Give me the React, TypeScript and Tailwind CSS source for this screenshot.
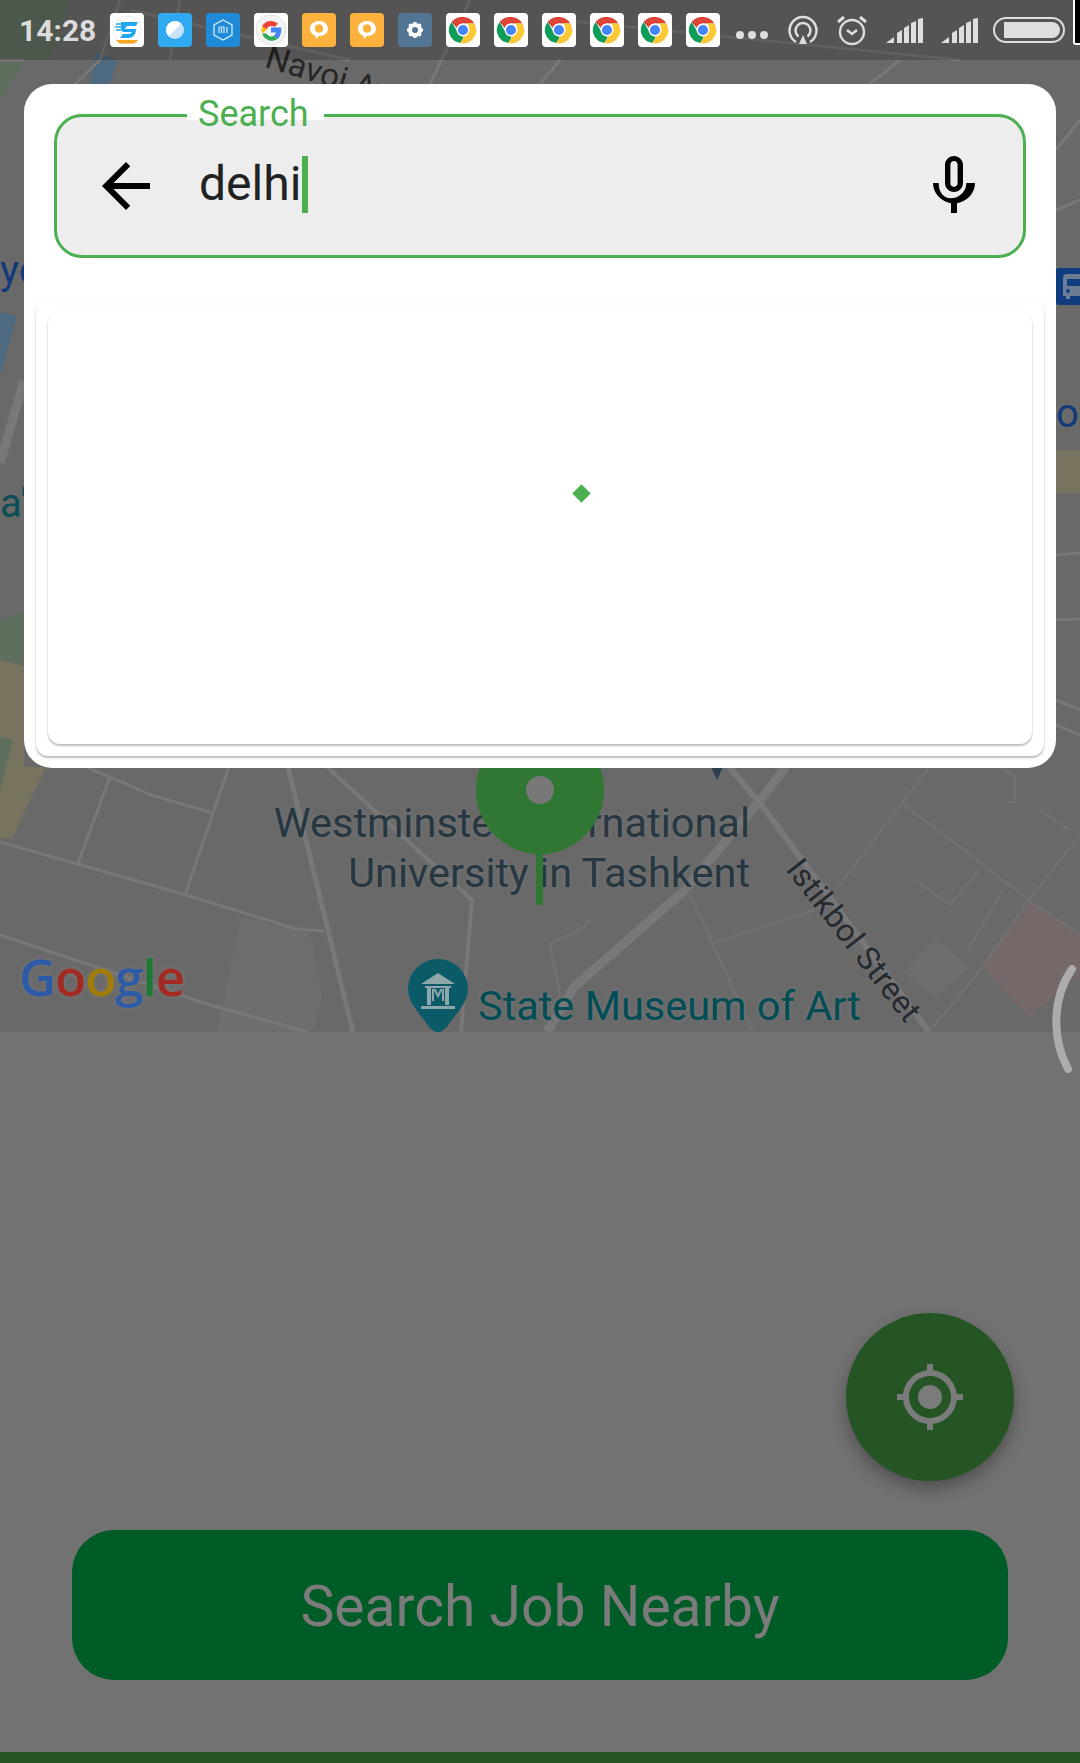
const roboto = "font-['Roboto',sans-serif]";

const Chrome = () => (
  <svg viewBox="0 0 34 34" className="w-[34px] h-[34px]">
    <rect width="34" height="34" rx="4" fill="#fff" />
    <path d="M17 4a13 13 0 0 1 11.3 6.5H17a6.5 6.5 0 0 0-6.2 4.4L5.7 9A13 13 0 0 1 17 4z" fill="#db4437" />
    <path d="M5.7 9l5.6 9.8A6.5 6.5 0 0 0 18 23.4L14.4 30A13 13 0 0 1 5.7 9z" fill="#0f9d58" />
    <path d="M28.3 10.5A13 13 0 0 1 14.4 30l5.6-9.7a6.5 6.5 0 0 0 1.5-9.8z" fill="#fcc934" />
    <circle cx="17" cy="17" r="6.4" fill="#fff" />
    <circle cx="17" cy="17" r="5" fill="#4285f4" />
  </svg>
);

const Speed = () => (
  <svg viewBox="0 0 34 34" className="w-[34px] h-[34px]">
    <rect width="34" height="34" rx="4" fill="#fff" />
    <circle cx="17" cy="17" r="14" fill="#fff" stroke="#eee" />
    <path d="M11 9h17l-2 4H17l-2 3h11c0 6-3 9-8 9H10l3-4h5c2 0 3-1 4-2h-9l-2-2z" fill="#23a6f0" />
    <path d="M6 11h6M5 14h6M6 17h5" stroke="#23a6f0" strokeWidth="1.6" />
    <path d="M6 27h22a14 14 0 0 1-4 3.5H10A14 14 0 0 1 6 27z" fill="#f5a623" />
  </svg>
);

const Planet = () => (
  <svg viewBox="0 0 34 34" className="w-[34px] h-[34px]">
    <rect width="34" height="34" rx="4" fill="#2fa9ef" />
    <circle cx="17" cy="17" r="9" fill="#c5e2f8" />
    <path d="M23.4 10.6A9 9 0 0 0 10.6 23.4z" fill="#fff" />
  </svg>
);

const Mi = () => (
  <svg viewBox="0 0 34 34" className="w-[34px] h-[34px]">
    <rect width="34" height="34" rx="4" fill="#1f8bd8" />
    <path d="M17 7l9 5v10l-9 5-9-5V12z" fill="none" stroke="#d5ecfb" strokeWidth="1.3" />
    <path d="M13 14h5v6M13 14v6M15.500 15v5M21 14v6" fill="none" stroke="#d5ecfb" strokeWidth="1.2" />
  </svg>
);

const GoogleIcon = () => (
  <svg viewBox="0 0 34 34" className="w-[34px] h-[34px]">
    <rect width="34" height="34" rx="4" fill="#fff" />
    <circle cx="17" cy="17" r="15" fill="#f4f4f4" stroke="#e2e2e2" />
    <g transform="translate(17 17) scale(1.7) translate(-17 -17)">
      <path d="M23 15.500h-6v3h3a3.500 3.500 0 0 1-1.400 1.900l2.300 1.900c1.400-1.300 2.300-3.400 2.100-6.800z" fill="#4285f4" />
      <path d="M11.800 19a6 6 0 0 0 9.100 3.300l-2.300-1.900a3 3 0 0 1-4.200-1.400z" fill="#34a853" />
      <path d="M11.800 14.700a6 6 0 0 0 0 4.300l2.600-2a3 3 0 0 1 0-.400z" fill="#fbbc05" />
      <path d="M11.800 14.700l2.600 1.900a3 3 0 0 1 4.600-1.300l2.100-2a6 6 0 0 0-9.300 1.400z" fill="#ea4335" />
    </g>
  </svg>
);

const Chat = () => (
  <svg viewBox="0 0 34 34" className="w-[34px] h-[34px]">
    <rect width="34" height="34" rx="4" fill="#feb23e" />
    <path d="M17 8c-5 0-9 3.400-9 7.700 0 3.300 2.400 6 5.500 7l.3 3.300 3.300-2.900c5 0 8.900-3.300 8.900-7.400C26 11.400 22 8 17 8z" fill="#fff" />
    <circle cx="17" cy="15.500" r="4.300" fill="#feb23e" />
  </svg>
);

const Gear = () => (
  <svg viewBox="0 0 34 34" className="w-[34px] h-[34px]">
    <rect width="34" height="34" rx="4" fill="#527594" />
    <circle cx="17" cy="17" r="5" fill="none" stroke="#fff" strokeWidth="4" />
    <path d="M17 9v16M9 17h16M11.300 11.300l11.400 11.400M22.700 11.300L11.300 22.700" stroke="#fff" strokeWidth="3" strokeDasharray="3.500 9" />
  </svg>
);

const Signal = () => (
  <svg viewBox="0 0 37 25" className="w-[37px] h-[25px]" fill="#dedede">
    <path d="M0 25l8-6v6zM11 25V15l5-3v13zM18 25V10l5-3v18zM25 25V5l5-2v22zM32 25V1l5-1v25z" />
  </svg>
);

const notifications = [Speed, Planet, Mi, GoogleIcon, Chat, Chat, Gear, Chrome, Chrome, Chrome, Chrome, Chrome, Chrome];

const StatusBar = () => (
  <div className="absolute top-0 left-0 w-full h-[60px] bg-black/20 flex items-center">
    <span className={`ml-[19px] w-[91px] text-[30px] font-bold text-[#dcdcdc] ${roboto}`}>14:28</span>
    <div className="flex gap-[14px]">
      {notifications.map((Icon, i) => (
        <Icon key={i} />
      ))}
    </div>
    <div className="ml-[16px] mt-[9px] flex gap-[4px]">
      <div className="w-[8px] h-[8px] rounded-full bg-[#dedede]" />
      <div className="w-[8px] h-[8px] rounded-full bg-[#dedede]" />
      <div className="w-[8px] h-[8px] rounded-full bg-[#dedede]" />
    </div>
    <svg viewBox="0 0 30 30" className="ml-[20px] w-[30px] h-[30px]" fill="none" stroke="#dedede" strokeWidth="2.400">
      <path d="M8 27a13.500 13.500 0 1 1 14 0" />
      <path d="M10.500 21.500a7.500 7.500 0 1 1 9 0" />
      <path d="M15 20l4 9h-8z" fill="#dedede" stroke="none" />
    </svg>
    <svg viewBox="0 0 32 32" className="ml-[18px] w-[32px] h-[32px]" fill="none" stroke="#dedede" strokeWidth="2.400">
      <circle cx="16" cy="18" r="12" />
      <path d="M11 16l5 4 5-4" />
      <path d="M2 8l6-5M30 8l-6-5" strokeWidth="3" />
    </svg>
    <div className="ml-[18px] flex gap-[18px] items-end">
      <Signal />
      <Signal />
    </div>
    <div className="ml-[15px] w-[72px] h-[26px] rounded-full border-[2px] border-[#dedede] p-[3px] pl-[9px]">
      <div className="w-full h-full rounded-r-full rounded-l-[3px] bg-[#dedede]" />
    </div>
  </div>
);

const MapRoads = () => (
  <svg viewBox="0 0 1080 1032" className="absolute inset-0 w-full h-full" fill="none">
    <path d="M0 0h70l-20 60H25L0 100zM0 620l24-8v90H0z" fill="#5f6f5e" />
    <path d="M96 53l21 7-7 24H90zM0 312l17 4L0 376z" fill="#4d6a80" />
    <path d="M0 660l24 6v101h22l-34 71H0z" fill="#77735f" />
    <path d="M0 737l13 3L0 790z" fill="#5e6e5d" />
    <path d="M1056 450h24v43h-24z" fill="#78735f" />
    <path d="M241 917l69 16 12 64-10 35h-95z" fill="#6c6e70" />
    <path d="M1031 902l49 33v40l-51 42-48-52z" fill="#746868" />
    <path d="M936 938l33 29-33 31-33-25z" fill="#6b6d6f" />

    <g stroke="#787878" strokeLinejoin="round">
      <path d="M786 767l-26 33-75 90-111 97-27 45" strokeWidth="9" />
      <path d="M729 767l31 36 169 229" strokeWidth="6" />
      <path d="M288 767l65 265" strokeWidth="5" />
      <path d="M327 767l145 133-11 132" strokeWidth="4" />
      <path d="M0 842l186 53 110 34 28 2" strokeWidth="3" />
      <path d="M0 935l210 70 98 27" strokeWidth="3" />
      <path d="M78 863l32-86 41 18 62 18-28 82M229 767l-16 46M86 767l24 10" strokeWidth="3" />
      <path d="M24 381L0 463" strokeWidth="9" />
      <path d="M0 60h24M1056 150l24-30M1056 210l24-10M1056 555l24-2M1056 620l24-1M1056 700l24 10M1056 725l24 10" strokeWidth="3" />
      <path d="M120 0l-20 60 -25 24M180 0l-10 60M470 0l-40 84M560 60l-20 24M900 60l-30 24" strokeWidth="3" />
      <path d="M130 10l220 50M560 20l400 40" strokeWidth="3" />
    </g>
    <g stroke="#727272" strokeWidth="2">
      <path d="M929 767l-27 36-66 87M902 803l127 97 51 35M1080 835l-51 65-50 72-50 60" />
      <path d="M714 943l101-33M688 890l65 142" />
      <path d="M980 870l-30 35-35-25M1003 890l-35 60" />
      <path d="M590 920c-10 15-30 15-40 25l10 50-10 15" />
      <path d="M1000 767l15 10 0 25-10 0M1040 810l30 20" />
    </g>
    <path d="M717 780l-6-13h12z" fill="#2c4050" />
  </svg>
);

const MapLabels = () => (
  <>
    <div className={`absolute top-[50px] left-[264px] text-[33px] text-[#262626] rotate-[17deg] ${roboto}`}>Navoi Av</div>
    <div className={`absolute top-[248px] left-0 text-[40px] leading-[46px] text-[#123a7a] ${roboto}`}>yo</div>
    <div className={`absolute top-[481px] left-0 text-[40px] leading-[46px] text-[#0a4f55] ${roboto}`}>a'i</div>
    <div className={`absolute top-[391px] left-[1056px] text-[40px] leading-[46px] text-[#123a7a] ${roboto}`}>o</div>
    <svg viewBox="0 0 24 37" className="absolute top-[268px] left-[1056px] w-[24px] h-[37px]">
      <path d="M3 0h21v37H3a3 3 0 0 1-3-3V3a3 3 0 0 1 3-3z" fill="#0f3d80" />
      <path d="M24 6h-13a4 4 0 0 0-4 4v18h3v3h4v-3h10z" fill="#6c7c92" />
      <path d="M11 11h13v7H11z" fill="#0f3d80" />
      <circle cx="12" cy="23" r="2" fill="#0f3d80" />
    </svg>
    <div className={`absolute top-[798px] right-[330px] text-right text-[41.5px] leading-[50px] text-[#263742] [text-shadow:0_0_4px_#777] ${roboto}`}>
      Westminster International
      <br />
      University in Tashkent
    </div>
    <div className={`absolute top-[981px] left-[478px] text-[41.5px] leading-[50px] text-[#004d55] [text-shadow:0_0_4px_#777] ${roboto}`}>State Museum of Art</div>
    <div className={`absolute top-[920px] left-[734px] w-[240px] whitespace-nowrap text-center text-[32px] leading-[40px] text-[#242a2e] rotate-[52deg] [text-shadow:0_0_4px_#777] ${roboto}`}>Istikbol Street</div>
    <div className="absolute top-[946px] left-[19px] text-[51px] leading-[60px] font-semibold tracking-[-1px] font-['Open_Sans',sans-serif] [text-shadow:0_0_5px_#7a7a7a]">
      <span className="text-[#2d5ba8]">G</span>
      <span className="text-[#a32a22]">o</span>
      <span className="text-[#a07c06]">o</span>
      <span className="text-[#2d5ba8]">g</span>
      <span className="text-[#1d7a32]">l</span>
      <span className="text-[#a32a22]">e</span>
    </div>
    <svg viewBox="0 0 60 75" className="absolute top-[959px] left-[408px] w-[60px] h-[75px]">
      <path d="M30 0a30 30 0 0 1 30 30c0 14-12 24-21 38l-9 7-9-7C12 54 0 44 0 30A30 30 0 0 1 30 0z" fill="#0a5a68" />
      <path d="M30 14l17 11H13zM17 27h26v2H17zM19 29h4v17h-4zM37 29h4v17h-4zM13 47h34v3H13z" fill="#8fa7ab" />
      <path d="M25 42V31h2l3 6 3-6h2v11" fill="none" stroke="#8fa7ab" strokeWidth="2" />
    </svg>
    <div className="absolute top-[726px] left-[476px] w-[128px] h-[128px] rounded-full bg-[#2f7732] flex items-center justify-center">
      <div className="w-[28px] h-[28px] rounded-full bg-[#777777]" />
    </div>
    <div className="absolute top-[850px] left-[536px] w-[7px] h-[55px] bg-[#2f7732]" />
  </>
);

const SearchPanel = () => (
  <div className="absolute top-[84px] left-[24px] w-[1032px] h-[684px] rounded-[28px] bg-white px-[12px] pt-[30px]">
    <div className="relative mx-[18px] h-[144px] rounded-[28px] border-[3px] border-[#4caf50] bg-[#ededed] flex items-center">
      <div className="absolute -top-[3px] left-[130px] w-[137px] h-[6px] bg-white" />
      <span className={`absolute -top-[24px] left-[141px] text-[36px] leading-[42px] text-[#4caf50] ${roboto}`}>Search</span>
      <svg viewBox="0 0 24 24" className="ml-[33px] w-[72px] h-[72px] shrink-0" fill="#000">
        <path d="M20 11H7.830l5.590-5.590L12 4l-8 8 8 8 1.410-1.410L7.830 13H20v-2z" />
      </svg>
      <span className={`ml-[37px] mb-[4px] text-[48px] leading-[60px] text-[#212121] ${roboto}`}>delhi</span>
      <div className="ml-[1px] mb-[3px] w-[6px] h-[57px] shrink-0 bg-[#4caf50]" />
      <svg viewBox="0 0 24 24" className="ml-auto mr-[33px] w-[72px] h-[72px] shrink-0" fill="#000">
        <path d="M12 14c1.660 0 2.990-1.340 2.990-3L15 5c0-1.660-1.340-3-3-3S9 3.340 9 5v6c0 1.660 1.340 3 3 3zm-1.200-9.100c0-.660.540-1.200 1.200-1.200.660 0 1.200.540 1.200 1.200l-.010 6.200c0 .660-.530 1.200-1.190 1.200-.660 0-1.200-.540-1.200-1.200V4.900zm5.300 6.100c0 3-2.540 5.100-5.100 5.100S6.900 14 6.900 11H5c0 3.410 2.720 6.230 6 6.720V21h2v-3.280c3.280-.480 6-3.300 6-6.720h-1.700z" />
      </svg>
    </div>
    <div className="mt-[42px] h-[456px] rounded-[12px] bg-white p-[12px] shadow-[0_2px_2px_rgba(0,0,0,0.25),0_0_2px_rgba(0,0,0,0.08)]">
      <div className="h-full rounded-[12px] bg-white pt-[175px] shadow-[0_2px_2px_rgba(0,0,0,0.25),0_0_2px_rgba(0,0,0,0.08)]">
        <div className="w-[13px] h-[13px] bg-[#4caf50] rotate-45 ml-[527px]" />
      </div>
    </div>
  </div>
);

export default function App() {
  return (
    <div className="relative w-[1080px] h-[1763px] overflow-hidden bg-[#727272] flex flex-col">
      <div className="relative h-[1032px] shrink-0 overflow-hidden bg-[#696969]">
        <MapRoads />
        <MapLabels />
        <StatusBar />
        <SearchPanel />
      </div>
      <div className="flex-1 flex flex-col">
        <div className="mt-[281px] mr-[66px] self-end w-[168px] h-[168px] rounded-full bg-[#255525] flex items-center justify-center shadow-[0_8px_16px_rgba(0,0,0,0.3)]">
          <svg viewBox="0 0 24 24" className="w-[72px] h-[72px]" fill="#7b7b7b">
            <path d="M12 8c-2.210 0-4 1.790-4 4s1.790 4 4 4 4-1.790 4-4-1.790-4-4-4zm8.940 3c-.460-4.170-3.770-7.480-7.940-7.940V1h-2v2.060C6.830 3.520 3.520 6.830 3.060 11H1v2h2.060c.460 4.170 3.770 7.480 7.940 7.940V23h2v-2.060c4.170-.460 7.480-3.770 7.940-7.940H23v-2h-2.060zM12 19c-3.870 0-7-3.130-7-7s3.130-7 7-7 7 3.130 7 7-3.130 7-7 7z" />
          </svg>
        </div>
        <div className={`mt-[49px] mx-[72px] h-[150px] rounded-[42px] bg-[#005c27] flex items-center justify-center pt-[3px] text-[57px] text-[#7b7b7b] ${roboto}`}>
          Search Job Nearby
        </div>
        <div className="mt-auto h-[11px] bg-[#255525]" />
      </div>
      <svg viewBox="0 0 40 110" className="absolute top-[965px] left-[1042px] w-[40px] h-[110px]" fill="none">
        <path d="M30 4C12 30 8 70 26 104" stroke="#acacac" strokeWidth="8" strokeLinecap="round" />
      </svg>
      <div className="absolute top-0 left-[1073px] w-[7px] h-[45px] bg-black border-l-[2px] border-b-[2px] border-white rounded-bl-[3px]" />
    </div>
  );
}
